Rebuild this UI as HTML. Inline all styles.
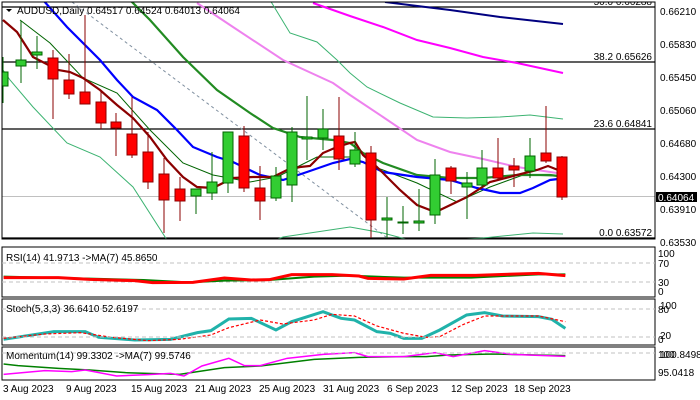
<!DOCTYPE html>
<html><head><meta charset="utf-8"><style>
html,body{margin:0;padding:0;background:#fff;}
svg{display:block;font-family:"Liberation Sans",sans-serif;}
text{font-size:10px;fill:#000;}
</style></head><body>
<svg width="700" height="400" viewBox="0 0 700 400" xmlns="http://www.w3.org/2000/svg">
<rect width="700" height="400" fill="#fff"/>
<defs><clipPath id="m"><rect x="2" y="2" width="653" height="237"/></clipPath></defs>
<g clip-path="url(#m)">
<!-- fib lines -->
<line x1="2" y1="7" x2="655" y2="7" stroke="#000" stroke-width="1.2"/>
<line x1="2" y1="62" x2="655" y2="62" stroke="#000" stroke-width="1.2"/>
<line x1="2" y1="129" x2="655" y2="129" stroke="#000" stroke-width="1.2"/>
<line x1="2" y1="196.5" x2="655" y2="196.5" stroke="#c0c0c0" stroke-width="1"/>
<line x1="2" y1="238" x2="655" y2="238" stroke="#000" stroke-width="1.2"/>
<!-- dashed diagonal -->
<line x1="72" y1="2" x2="390" y2="240" stroke="#8090a0" stroke-width="1" stroke-dasharray="3,3"/>
<!-- bands -->
<polyline fill="none" stroke="#3cb371" stroke-width="1" points="270,0 290,33 317,42 337,60 350,73 367,87 400,103 433,117 467,118 500,117 530,115 563,119"/>
<polyline fill="none" stroke="#3cb371" stroke-width="1" points="3,70 10,80 33,107 67,143 100,157 133,187 167,240"/>
<polyline fill="none" stroke="#3cb371" stroke-width="1" points="270,242 283,237 350,227 383,233 417,242 450,240 483,238 533,233 563,234"/>
<polyline fill="none" stroke="#006400" stroke-width="1" points="20,20 50,43 83,78 117,93 150,130 183,163 213,175 250,182 277,177 317,157 350,157 383,170 417,183 457,202 490,187 523,175 557,176"/>
<!-- MAs -->
<polyline fill="none" stroke="#000080" stroke-width="2" points="385,2 450,10 500,17 563,24"/>
<polyline fill="none" stroke="#ff00ff" stroke-width="2" points="313,3 350,16 383,27 417,40 450,48 483,57 517,63 563,73"/>
<polyline fill="none" stroke="#ee82ee" stroke-width="2" points="197,3 233,27 283,60 333,83 350,95 383,117 417,140 450,152 483,159 517,167 557,173"/>
<polyline fill="none" stroke="#228b22" stroke-width="2.2" points="130,0 150,20 183,57 217,90 250,113 273,128 300,137 333,140 350,143 363,153 383,163 417,175 450,178 483,178 517,175 550,175 558,176"/>
<polyline fill="none" stroke="#0000ff" stroke-width="2.2" points="43,0 67,27 100,60 117,80 133,97 157,110 177,130 193,147 217,157 233,162 260,175 283,180 307,172 333,163 350,159 363,162 383,172 417,177 450,180 477,188 500,193 520,193 533,188 550,180 558,179"/>
<polyline fill="none" stroke="#8b0000" stroke-width="2.2" points="3,20 17,32 33,57 58,70 70,72 83,78 100,90 117,105 133,118 150,137 167,160 183,177 197,187 213,188 233,178 253,177 273,177 287,170 300,167 310,166 323,153 337,147 350,143 355,142 363,155 377,167 400,190 417,205 430,210 440,210 467,197 490,182 517,175 537,170 548,166 558,170"/>
<!-- candles -->
<g stroke-width="1">
<g stroke="#006400" fill="#32cd32">
<line x1="3" y1="57" x2="3" y2="103"/><rect x="-2" y="72" width="10" height="14"/>
<line x1="21" y1="21" x2="21" y2="83"/><rect x="16" y="60" width="10" height="6"/>
<line x1="37" y1="36" x2="37" y2="69"/><rect x="32" y="52" width="10" height="3"/>
<line x1="196" y1="189" x2="196" y2="214"/><rect x="191" y="189" width="10" height="7"/>
<line x1="212" y1="152" x2="212" y2="200"/><rect x="207" y="182" width="10" height="11"/>
<line x1="228" y1="132" x2="228" y2="193"/><rect x="223" y="132" width="10" height="51"/>
<line x1="276" y1="167" x2="276" y2="201"/><rect x="271" y="176" width="10" height="22"/>
<line x1="292" y1="127" x2="292" y2="202"/><rect x="287" y="132" width="10" height="53"/>
<line x1="307" y1="96" x2="307" y2="160"/><rect x="302" y="137" width="10" height="2"/>
<line x1="323" y1="109" x2="323" y2="150"/><rect x="318" y="129" width="10" height="9"/>
<line x1="355" y1="132" x2="355" y2="167"/><rect x="350" y="150" width="10" height="14"/>
<line x1="387" y1="197" x2="387" y2="238"/><rect x="382" y="218" width="10" height="2"/>
<line x1="403" y1="206" x2="403" y2="234"/><rect x="398" y="222" width="10" height="1"/>
<line x1="419" y1="189" x2="419" y2="231"/><rect x="414" y="221" width="10" height="2"/>
<line x1="435" y1="159" x2="435" y2="224"/><rect x="430" y="175" width="10" height="40"/>
<line x1="467" y1="172" x2="467" y2="219"/><rect x="462" y="183" width="10" height="4"/>
<line x1="482" y1="150" x2="482" y2="187"/><rect x="477" y="168" width="10" height="17"/>
<line x1="530" y1="138" x2="530" y2="178"/><rect x="525" y="156" width="10" height="15"/>
</g>
<g stroke="#8b0000" fill="#ff0000">
<line x1="53" y1="50" x2="53" y2="119"/><rect x="48" y="58" width="10" height="21"/>
<line x1="69" y1="54" x2="69" y2="99"/><rect x="64" y="80" width="10" height="14"/>
<line x1="85" y1="15" x2="85" y2="92"/><rect x="80" y="92" width="10" height="12"/>
<line x1="101" y1="92" x2="101" y2="129"/><rect x="96" y="102" width="10" height="21"/>
<line x1="116" y1="113" x2="116" y2="156"/><rect x="111" y="122" width="10" height="6"/>
<line x1="132" y1="97" x2="132" y2="158"/><rect x="127" y="134" width="10" height="21"/>
<line x1="148" y1="132" x2="148" y2="189"/><rect x="143" y="152" width="10" height="30"/>
<line x1="164" y1="158" x2="164" y2="233"/><rect x="159" y="174" width="10" height="26"/>
<line x1="180" y1="177" x2="180" y2="221"/><rect x="175" y="189" width="10" height="12"/>
<line x1="244" y1="126" x2="244" y2="192"/><rect x="239" y="136" width="10" height="52"/>
<line x1="260" y1="166" x2="260" y2="220"/><rect x="255" y="188" width="10" height="13"/>
<line x1="339" y1="97" x2="339" y2="170"/><rect x="334" y="136" width="10" height="23"/>
<line x1="371" y1="146" x2="371" y2="238"/><rect x="366" y="153" width="10" height="67"/>
<line x1="451" y1="166" x2="451" y2="194"/><rect x="446" y="168" width="10" height="13"/>
<line x1="498" y1="138" x2="498" y2="180"/><rect x="493" y="168" width="10" height="10"/>
<line x1="514" y1="158" x2="514" y2="187"/><rect x="509" y="166" width="10" height="4"/>
<line x1="546" y1="106" x2="546" y2="163"/><rect x="541" y="153" width="10" height="8"/>
<line x1="562" y1="156" x2="562" y2="200"/><rect x="557" y="157" width="10" height="40"/>
</g>
</g>
<text x="652" y="5" text-anchor="end">50.0 0.66288</text>
<text x="652" y="60" text-anchor="end">38.2 0.65626</text>
<text x="652" y="127" text-anchor="end">23.6 0.64841</text>
<text x="652" y="236" text-anchor="end">0.0 0.63572</text>
</g>
<rect x="2" y="2" width="653" height="237" fill="none" stroke="#000" stroke-width="1"/>
<polygon points="6,9 12,9 9,12" fill="#000"/>
<text x="17" y="14" fill="#000">AUDUSD,Daily  0.64517 0.64524 0.64013 0.64064</text>
<!-- main axis -->
<g font-size="10">
<text x="660" y="15">0.66210</text>
<text x="660" y="48">0.65830</text>
<text x="660" y="81">0.65450</text>
<text x="660" y="114">0.65060</text>
<text x="660" y="147">0.64680</text>
<text x="660" y="180">0.64300</text>
<text x="660" y="213">0.63910</text>
<text x="660" y="246">0.63530</text>
</g>
<rect x="656" y="192" width="41" height="10" fill="#000"/>
<text x="658" y="201" style="fill:#fff">0.64064</text>
<!-- RSI panel -->
<rect x="2" y="247" width="653" height="50" fill="none" stroke="#000"/>
<line x1="2" y1="263" x2="655" y2="263" stroke="#c0c0c0" stroke-dasharray="4,3"/>
<line x1="2" y1="282" x2="655" y2="282" stroke="#c0c0c0" stroke-dasharray="4,3"/>
<g transform="translate(0,240) scale(0.4487,0.3333)">
<polyline fill="none" stroke="#008000" stroke-width="2" vector-effect="non-scaling-stroke" points="8,110 200,116 320,120 420,127 500,122 600,120 700,110 780,107 900,113 1050,113 1200,103 1260,103"/>
<polyline fill="none" stroke="#ff0000" stroke-width="3" vector-effect="non-scaling-stroke" points="8,113 130,113 200,118 300,122 340,128 430,127 500,114 560,120 600,119 650,104 740,104 800,108 820,115 900,117 960,106 1060,106 1200,100 1260,107"/>
<polyline fill="none" stroke="#20b2aa" stroke-width="3" vector-effect="non-scaling-stroke" points="8,298 120,275 190,275 220,292 300,300 380,298 440,278 470,272 510,237 560,235 615,270 650,245 720,215 760,235 790,240 840,275 870,280 900,295 940,295 980,270 1040,225 1080,218 1120,228 1200,230 1230,238 1260,265"/>
<polyline fill="none" stroke="#ff0000" stroke-width="1.2" stroke-dasharray="3,2" vector-effect="non-scaling-stroke" points="8,295 100,282 180,278 250,292 330,302 400,298 470,285 510,263 580,240 630,252 700,240 740,223 790,228 840,258 900,280 950,292 980,290 1030,255 1080,228 1200,228 1260,245"/>
<polyline fill="none" stroke="#008000" stroke-width="1.5" vector-effect="non-scaling-stroke" points="8,372 40,377 130,385 200,390 280,398 400,403 500,383 580,378 700,358 800,352 900,350 950,350 1000,345 1100,342 1260,347"/>
<polyline fill="none" stroke="#ff00ff" stroke-width="1.5" vector-effect="non-scaling-stroke" points="8,403 100,392 160,395 190,390 260,408 330,404 380,400 410,408 450,378 510,355 545,377 580,377 640,355 720,343 790,338 820,350 900,350 970,338 1010,350 1080,332 1140,343 1260,349"/>
</g>
<text x="6" y="261">RSI(14) 41.9713  -&gt;MA(7) 45.8650</text>
<text x="658" y="257">100</text><text x="658" y="267">70</text><text x="658" y="286">30</text><text x="658" y="295">0</text>
<!-- Stoch -->
<rect x="2" y="299" width="653" height="46" fill="none" stroke="#000"/>
<line x1="2" y1="309" x2="655" y2="309" stroke="#c0c0c0" stroke-dasharray="4,3"/>
<line x1="2" y1="337" x2="655" y2="337" stroke="#c0c0c0" stroke-dasharray="4,3"/>
<text x="6" y="312">Stoch(5,3,3) 36.6410 52.6197</text>
<text x="660" y="309">100</text><text x="658" y="313">80</text><text x="660" y="339">20</text><text x="658" y="343">0</text>
<!-- Momentum -->
<rect x="2" y="347" width="653" height="33" fill="none" stroke="#000"/>
<line x1="2" y1="353" x2="655" y2="353" stroke="#c0c0c0" stroke-dasharray="4,3"/>
<text x="6" y="359">Momentum(14) 99.3302  -&gt;MA(7) 99.5746</text>
<text x="658" y="358">100</text><text x="660" y="358">100.8498</text><text x="658" y="376">95.0418</text>
<!-- dates -->
<g>
<text x="3" y="392">3 Aug 2023</text>
<text x="66" y="392">9 Aug 2023</text>
<text x="131" y="392">15 Aug 2023</text>
<text x="195" y="392">21 Aug 2023</text>
<text x="259" y="392">25 Aug 2023</text>
<text x="323" y="392">31 Aug 2023</text>
<text x="387" y="392">6 Sep 2023</text>
<text x="451" y="392">12 Sep 2023</text>
<text x="514" y="392">18 Sep 2023</text>
</g>
</svg>
</body></html>
